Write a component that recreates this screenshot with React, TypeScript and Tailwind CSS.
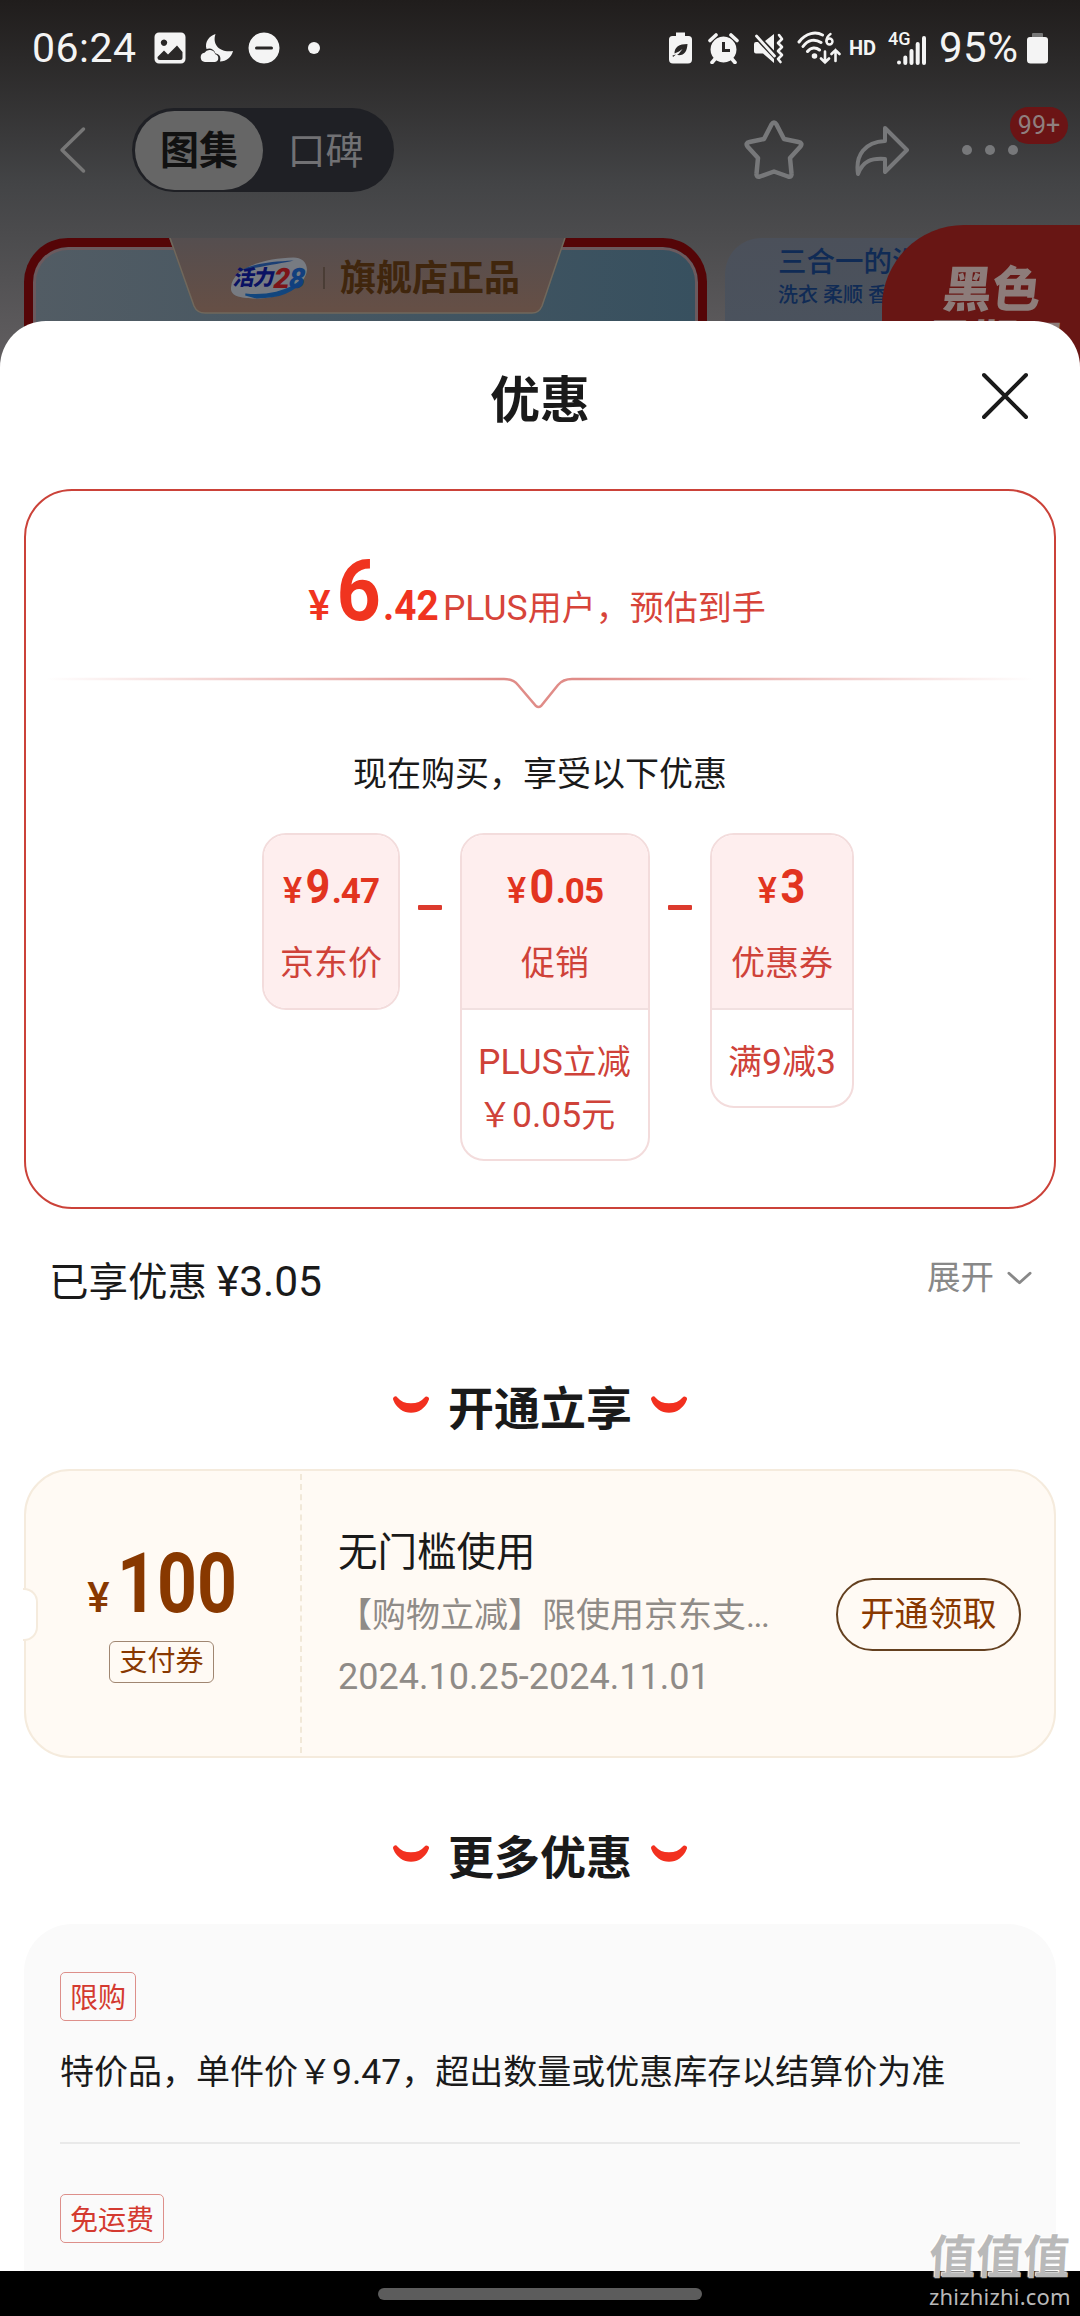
import type { ReactNode } from 'react';

interface PriceStep {
    yuan: string;
    cents?: string;
    label: string;
    details?: string[];
    width: string;
}

const steps: PriceStep[] = [
    { yuan: '9', cents: '.47', label: '京东价', width: 'w-[138px]' },
    { yuan: '0', cents: '.05', label: '促销', details: ['PLUS立减', '￥0.05元'], width: 'w-[190px]' },
    { yuan: '3', label: '优惠券', details: ['满9减3'], width: 'w-[144px]' },
];

// Latin letters and digits run slightly larger than the CJK glyphs beside them
function Mixed({ text }: { text: string }) {
    return (
        <>
            {text.split(/([A-Z0-9.]+)/).map((part, i) => (
                <span key={i} className={i % 2 ? 'text-[1.045em]' : ''}>{part}</span>
            ))}
        </>
    );
}

function StatusBar() {
    return (
        <div className="flex h-[96px] items-center justify-between pl-[32px] pr-[32px] text-[#f4f4f4]">
            <div className="flex items-center">
                <span className="w-[106px] text-[41px] leading-[48px] tracking-[0.5px]">06:24</span>
                <svg className="ml-4 h-8 w-8" viewBox="0 0 32 32" fill="currentColor">
                    <path fillRule="evenodd" d="M5 0.5h22a4.5 4.5 0 0 1 4.5 4.5v22a4.5 4.5 0 0 1-4.5 4.5H5A4.5 4.5 0 0 1 .5 27V5A4.5 4.5 0 0 1 5 .5ZM10 7.5a3.2 3.2 0 1 0 .01 0ZM3.5 25l6.5-6.5 4 4 9-9 5.5 6.5v5.500a2.500 2.500 0 0 1-2.500 2.500H6A2.500 2.500 0 0 1 3.500 25.500Z" />
                </svg>
                <svg className="ml-[14px] h-8 w-[34px]" viewBox="0 0 34 32" fill="currentColor">
                    <path d="M15.500 2C12 12 19 21 33 19c-1.500 6-6.500 10.500-13 10.500 1.500-5-1-7.500-4.500-8C14 17 10 15.500 6.500 17 4.500 10 9 4 15.500 2Z" />
                    <path d="M5 30a4.700 4.700 0 0 1-.5-9.300 6 6 0 0 1 10.800 1.500A4 4 0 0 1 15 30Z" />
                </svg>
                <svg className="ml-[14px] h-8 w-8" viewBox="0 0 32 32" fill="currentColor">
                    <path fillRule="evenodd" d="M16 .5a15.500 15.500 0 1 0 .01 0ZM8.500 14.500h15a1.500 1.500 0 0 1 0 3h-15a1.500 1.500 0 0 1 0-3Z" />
                </svg>
                <span className="ml-[28px] h-3 w-3 rounded-full bg-[#f4f4f4]" />
            </div>
            <div className="flex items-center">
                <svg className="h-8 w-[23px]" viewBox="0 0 23 32" fill="currentColor">
                    <path fillRule="evenodd" d="M7 .5h9V4h3.500A3.500 3.500 0 0 1 23 7.500v20a4 4 0 0 1-4 4H4a4 4 0 0 1-4-4v-20A3.500 3.500 0 0 1 3.500 4H7ZM18.500 12C10 12 5.500 15 5.500 21.500L10 19.500 13.500 17 10 21.500 8 23c7 1 10-3 10.500-11ZM3.500 23.500 7 22.500 4 25Z" />
                </svg>
                <svg className="ml-4 h-8 w-[31px]" viewBox="0 0 31 32" fill="currentColor">
                    <path fillRule="evenodd" d="M15.500 4.500a13 13 0 1 0 .01 0ZM14 10h3v7h5v3h-8Z" />
                    <path d="M2 8.500 8 3M29 8.500 23 3M7 27l-3 3.500M24 27l3 3.500" stroke="currentColor" strokeWidth="3.600" strokeLinecap="round" />
                </svg>
                <svg className="ml-[14px] h-8 w-[32px]" viewBox="0 0 32 32" fill="currentColor">
                    <path d="M1 12a2 2 0 0 1 2-2h2l16 17V31L10 21.500H3a2 2 0 0 1-2-2ZM12 9l9-7v16.500Z" />
                    <path d="m3.500 4 18 20" stroke="currentColor" strokeWidth="2.800" strokeLinecap="round" />
                    <path d="m26 3 3 4-4 4 4 4-4 4 4 4-4 4 2.500 3" fill="none" stroke="currentColor" strokeWidth="2.600" strokeLinecap="round" strokeLinejoin="round" />
                </svg>
                <svg className="ml-[12px] h-[34px] w-[44px]" viewBox="0 0 44 34" fill="none" stroke="currentColor" strokeWidth="3" strokeLinecap="round">
                    <path d="M2 11C9 1.500 19 .5 25.500 4M6 15.500c5-7 12-8 18-4M10.500 20.500c3.500-4.500 8.500-4.500 12-1.500" />
                    <circle cx="17.500" cy="25" r="1.300" fill="currentColor" />
                    <path d="M28 20.500v11m-4-4 4 4 4-4M38.500 30V19m-4 4 4-4 4 4" strokeWidth="2.600" />
                    <path d="M33.500 3c-3 2-4 4-4 7" strokeWidth="2.400" />
                    <circle cx="32.500" cy="10.500" r="3" strokeWidth="2.400" />
                </svg>
                <span className="ml-[8px] text-[20px] font-bold leading-8">HD</span>
                <div className="relative ml-[12px] h-[34px] w-[38px]">
                    <span className="absolute left-0 top-0 text-[18px] font-medium leading-[16px]">4G</span>
                    <svg className="h-full w-full" viewBox="0 0 38 34" stroke="currentColor" strokeWidth="4" strokeLinecap="round">
                        <path d="M11 31.500v0M17.300 26.500v5.500M23.500 20v12M29.700 13v19M36 7v25" />
                    </svg>
                </div>
                <span className="ml-[13px] w-[82px] text-[42px] leading-[48px] tracking-[0.5px]">95%</span>
                <svg className="ml-[6px] h-8 w-[21px]" viewBox="0 0 21 32" fill="currentColor">
                    <path d="M6 1h9a1 1 0 0 1 1 1v3H5V2a1 1 0 0 1 1-1Z" fill="#777" />
                    <path d="M3 5h15a3 3 0 0 1 3 3v20a3.500 3.500 0 0 1-3.500 3.500h-14A3.500 3.500 0 0 1 0 28V8a3 3 0 0 1 3-3Z" />
                </svg>
            </div>
        </div>
    );
}

function NavHeader() {
    return (
        <div className="flex h-[108px] items-center pl-[58px]">
            <svg className="h-[48px] w-[30px]" viewBox="0 0 30 48" fill="none" stroke="#777" strokeWidth="3.500" strokeLinecap="round" strokeLinejoin="round">
                <path d="M25.500 3 4 24l21.500 21" />
            </svg>
            <div className="ml-[44px] flex h-[84px] w-[262px] items-center rounded-full bg-[#1f2025] pl-[3px]">
                <div className="flex h-[79px] w-[128px] items-center justify-center rounded-full bg-[#666] pt-[3px] text-[39px] font-bold text-[#111]">图集</div>
                <div className="flex flex-1 items-center justify-center pr-[6px] pt-[3px] text-[38px] text-[#717174]">口碑</div>
            </div>
            <svg className="ml-[350px] h-[62px] w-[60px]" viewBox="0 0 60 62" fill="none" stroke="#77787a" strokeWidth="4.500" strokeLinejoin="round">
                <path d="M27.500 5.500q2.500-4 5 0l7.500 14.500 14.500 3q4.500 1 2 4.500L46 39l1.500 15.500q.5 4-3.500 3L30 52.500l-14 5q-4 1-3.500-3L14 39 3.500 27.500q-2.500-3.500 2-4.500L20 20Z" />
            </svg>
            <svg className="ml-[50px] h-[52px] w-[56px]" viewBox="0 0 56 52" fill="none" stroke="#77787a" strokeWidth="4" strokeLinejoin="round">
                <path d="M31 4 53 26 31 48V35C17 34 9 37 4 50 1 31 11 18 31 17Z" />
            </svg>
            <div className="relative ml-[52px] flex gap-[13px]">
                <span className="h-[10px] w-[10px] rounded-full bg-[#77787a]" />
                <span className="h-[10px] w-[10px] rounded-full bg-[#77787a]" />
                <span className="h-[10px] w-[10px] rounded-full bg-[#77787a]" />
                <span className="absolute -top-[38px] left-[48px] flex h-[37px] w-[58px] items-center justify-center rounded-full bg-[#6b1415] text-[25px] text-[#8f7f7f]">99+</span>
            </div>
        </div>
    );
}

function Banners() {
    return (
        <div className="flex h-[142px] items-start pl-[24px] pt-[13px]">
            <div className="relative h-[160px] w-[684px] rounded-t-[44px] border-[9px] border-b-0 border-[#550507] bg-linear-to-r from-[#525c64] to-[#37505f] shadow-[inset_0_0_0_3px_#6b5a5e]">
                <svg className="absolute -top-[9px] left-[136px] h-[77px] w-[400px]" viewBox="0 0 400 77">
                    <defs>
                        <linearGradient id="tab" x1="0" y1="0" x2="0" y2="1">
                            <stop offset="0" stopColor="#554e4f" />
                            <stop offset="1" stopColor="#664f45" />
                        </linearGradient>
                    </defs>
                    <path d="M0 0H396L373 68q-3 7-10 7H36q-8 0-11-7Z" fill="url(#tab)" />
                    <path d="M396 0 373 68q-3 7-10 7H36q-8 0-11-7L1 0" fill="none" stroke="#70685c" strokeWidth="1.500" />
                </svg>
                <div className="relative flex items-center pl-[197px] pt-[6px]">
                    <div className="relative h-[46px] w-[78px]">
                        <svg className="absolute inset-0 h-full w-full" viewBox="0 0 76 44">
                            <path d="M1 31C2 14 28 3 62 2c7 0 13 4 13 12C74 30 50 43 22 42 10 41 0 40 1 31Z" fill="#777b82" />
                            <path d="M15 38c20 2 42-2 55-14-8 12-24 17-44 17Z" fill="#12467e" stroke="#12467e" strokeWidth="2" />
                            <path d="M10 15C22 8 40 6 62 5 50 8 34 10 10 15Z" fill="#1b3f74" />
                        </svg>
                        <span className="absolute left-[4px] top-[10px] flex -skew-x-12 items-center whitespace-nowrap text-[21px] font-black leading-[27px] tracking-[-1px] text-[#0a1263]">
                            活力<span className="text-[28px] text-[#7c1418]">2</span><span className="text-[28px] text-[#123f7e]">8</span>
                        </span>
                    </div>
                    <span className="ml-[15px] h-[22px] w-[2px] bg-[#4a3d35]" />
                    <span className="ml-[15px] mt-[2px] text-[36px] font-bold leading-[48px] text-[#40260d]">旗舰店正品</span>
                </div>
            </div>
            <div className="ml-[18px] h-[160px] w-[200px] shrink-0 overflow-hidden rounded-tl-[36px] bg-linear-to-b from-[#4b505a] to-[#4a5460] pl-[53px] pt-[6px]">
                <p className="whitespace-nowrap text-[28.500px] font-medium leading-[38px] text-[#102b55]">三合一的洗</p>
                <p className="whitespace-nowrap text-[20px] font-medium leading-[26px] text-[#102b55]">洗衣 柔顺 香</p>
            </div>
            <div className="-ml-[43px] -mt-[13px] h-[160px] w-[198px] shrink-0 rounded-tl-[82px] bg-[#681614] pl-[61px] pt-[39px]">
                <p className="-skew-x-6 whitespace-nowrap text-[49px] font-black leading-[54px] text-[#8d7c7a]">黑色</p>
                <p className="-ml-[18px] -skew-x-6 whitespace-nowrap text-[46px] font-black leading-[48px] text-[#8d7c7a]">星期五</p>
            </div>
        </div>
    );
}

function StepCard({ step }: { step: PriceStep }) {
    return (
        <div className={`${step.width} overflow-hidden rounded-[24px] border-2 border-[#f3dcdc] bg-white text-[34px] text-[#cf4239]`}>
            <div className="flex h-[173px] flex-col items-center bg-[#feeeee] pt-[28px]">
                <div className="flex h-[48px] items-baseline font-bold leading-[48px] text-[#e2341f]">
                    <span className="mr-[2px] text-[36px] font-medium">¥</span>
                    <span className="inline-block scale-x-90 text-[48px]">{step.yuan}</span>
                    {step.cents && <span className="text-[35px] tracking-[-1px]">{step.cents}</span>}
                </div>
                <span className="mt-[32px] leading-[40px]">{step.label}</span>
            </div>
            {step.details && (
                <div className="border-t-2 border-[#f1e0e0] px-[16px] pb-[17px] pt-[26px] leading-[53px]">
                    {step.details.map(line => (
                        <p key={line} className="whitespace-nowrap"><Mixed text={line} /></p>
                    ))}
                </div>
            )}
        </div>
    );
}

function Minus() {
    return <span className="mt-[72px] h-[5px] w-[24px] rounded-[1px] bg-[#dc3a2d]" />;
}

function Smile() {
    return (
        <svg className="-mt-[6px] h-[20px] w-[38px]" viewBox="0 0 38 20" fill="#f2301f" stroke="#f2301f" strokeWidth="5" strokeLinecap="round" strokeLinejoin="round">
            <path d="M3.500 4C9 19 29 19 34.500 4 27 13 11 13 3.500 4Z" />
        </svg>
    );
}

function SectionTitle({ children }: { children: ReactNode }) {
    return (
        <div className="flex h-[60px] items-center justify-center gap-[18px]">
            <Smile />
            <h3 className="pt-[2px] text-[46px] font-bold leading-[60px] text-[#1a1a1a]">{children}</h3>
            <Smile />
        </div>
    );
}

function PriceSummary() {
    return (
        <div className="mx-6 mt-[14px] flex h-[720px] flex-col items-center rounded-[48px] border-2 border-[#cb4239] pt-[58px]">
            <div className="flex h-[84px] items-baseline pr-[6px] leading-[84px] text-[#f0341f]">
                <span className="mr-[3px] text-[42px] font-medium">¥</span>
                <span className="inline-block scale-x-90 text-[86px] font-bold">6</span>
                <span className="inline-block w-[55px] origin-left scale-x-[.9] text-[43px] font-bold">.42</span>
                <span className="ml-[5px] text-[34px] text-[#d7443a]"><Mixed text="PLUS用户，预估到手" /></span>
            </div>
            <svg className="mt-[37px] h-[40px] w-[988px]" viewBox="0 0 988 40" fill="none">
                <defs>
                    <linearGradient id="fade" gradientUnits="userSpaceOnUse" x1="0" y1="0" x2="988" y2="0">
                        <stop offset="0" stopColor="#e08c88" stopOpacity="0" />
                        <stop offset="0.46" stopColor="#e08c88" />
                        <stop offset="0.54" stopColor="#e08c88" />
                        <stop offset="1" stopColor="#e08c88" stopOpacity="0" />
                    </linearGradient>
                </defs>
                <path d="M0 9H458q9 0 14 6l18 21q2.500 2 5 0l17-21q5-6 14-6H988" stroke="url(#fade)" strokeWidth="2.500" />
            </svg>
            <p className="mt-[44px] text-[34px] leading-[40px] text-[#1a1a1a]">现在购买，享受以下优惠</p>
            <div className="ml-[236px] mt-[39px] flex items-start gap-[18px] self-start">
                <StepCard step={steps[0]} />
                <Minus />
                <StepCard step={steps[1]} />
                <Minus />
                <StepCard step={steps[2]} />
            </div>
        </div>
    );
}

function Coupon() {
    return (
        <div className="relative mx-6 mt-[31px] flex h-[289px] rounded-[46px] border-2 border-[#f5ebdd] bg-[#fffaf4]">
            <span className="absolute -left-[3px] top-[117px] h-[53px] w-[15px] rounded-r-[14px] border-2 border-l-0 border-[#f5ebdd] bg-white" />
            <div className="my-[3px] flex w-[276px] flex-col items-center border-r-2 border-dashed border-[#f1e8d8] pr-[3px] pt-[68px] text-[#883800]">
                <div className="flex h-[84px] items-baseline leading-[84px]">
                    <span className="mr-[7px] text-[42px] font-medium">¥</span>
                    <span className="inline-block w-[119px] origin-left scale-x-[.83] text-[84px] font-bold">100</span>
                </div>
                <span className="mt-[15px] flex h-[42px] w-[105px] items-center justify-center rounded-[6px] border border-[#a08671] text-[28px]">支付券</span>
            </div>
            <div className="flex flex-1 flex-col pl-[36px] pt-[56px]">
                <p className="text-[39.500px] leading-[52px] text-[#1a1a1a]">无门槛使用</p>
                <p className="mt-[14px] text-[34px] leading-[44px] text-[#8f8b87]">【购物立减】限使用京东支<span className="tracking-[-1.500px]">...</span></p>
                <p className="mt-[18px] text-[36px] leading-[44px] text-[#8f8b87]">2024.10.25-2024.11.01</p>
            </div>
            <button className="mr-[33px] mt-[107px] h-[73px] w-[185px] rounded-full border-2 border-[#64401f] text-[34px] text-[#883800]">开通领取</button>
        </div>
    );
}

function Tag({ children }: { children: ReactNode }) {
    return (
        <span className="flex h-[49px] w-fit items-center rounded-[5px] border border-[#dd8f8a] px-[9px] pt-[4px] text-[28px] text-[#d43a30]">
            {children}
        </span>
    );
}

export default function App() {
    return (
        <div className="flex h-[2316px] w-[1080px] flex-col overflow-hidden bg-black font-['Roboto','Noto_Sans_CJK_SC',sans-serif]">
            <div className="h-[367px] shrink-0 overflow-hidden bg-linear-to-b from-[#201d1c] via-[#434446] via-50% to-[#625f61]">
                <StatusBar />
                <NavHeader />
                <div className="mt-[21px]">
                    <Banners />
                </div>
            </div>

            <div className="relative -mt-[46px] h-[1950px] shrink-0 overflow-hidden rounded-t-[46px] bg-white">
                <div className="flex h-[154px] items-center justify-between px-[52px]">
                    <span className="w-[46px]" />
                    <h2 className="pt-[5px] text-[50px] font-bold leading-[60px] text-[#1a1a1a]">优惠</h2>
                    <svg className="-mt-[5px] h-[48px] w-[46px]" viewBox="0 0 46 48" stroke="#1a1a1a" strokeWidth="4" strokeLinecap="round">
                        <path d="M2 3 44 45M44 3 2 45" />
                    </svg>
                </div>

                <PriceSummary />

                <div className="mt-[49px] flex h-[48px] items-center justify-between pl-[49px] pr-[48px]">
                    <p className="whitespace-pre pt-[1px] text-[39.500px] leading-[48px] text-[#1a1a1a]">已享优惠 <span className="text-[42.500px]">¥3.05</span></p>
                    <div className="-mt-[8px] flex items-center gap-[13px] text-[33.500px] leading-[40px] text-[#888]">
                        展开
                        <svg className="h-[14px] w-[25px]" viewBox="0 0 26 14" fill="none" stroke="currentColor" strokeWidth="3" strokeLinecap="round" strokeLinejoin="round">
                            <path d="m2 2 11 10L24 2" />
                        </svg>
                    </div>
                </div>

                <div className="mt-[72px]">
                    <SectionTitle>开通立享</SectionTitle>
                </div>
                <Coupon />

                <div className="mt-[69px]">
                    <SectionTitle>更多优惠</SectionTitle>
                </div>
                <div className="mx-6 mt-[37px] h-[400px] rounded-t-[48px] bg-[#fafafa] px-[36px] pt-[48px]">
                    <Tag>限购</Tag>
                    <p className="mt-[31px] whitespace-nowrap text-[34px] leading-[40px] text-[#1a1a1a]"><Mixed text="特价品，单件价￥9.47，超出数量或优惠库存以结算价为准" /></p>
                    <div className="mt-[50px] h-[2px] bg-[#e9e9e9]" />
                    <div className="mt-[50px]">
                        <Tag>免运费</Tag>
                    </div>
                </div>
            </div>

            <div className="relative flex h-[45px] shrink-0 justify-center pt-[17px]">
                <span className="h-[12px] w-[324px] rounded-full bg-[#5c5c5c]" />
                <div className="absolute bottom-[8px] right-[9px] flex w-[142px] flex-col text-[#b9b9b9]">
                    <span className="-skew-x-3 whitespace-nowrap text-[47px] font-bold leading-[48px] [text-shadow:-1px_-1px_1px_#fff]">值值值</span>
                    <span className="mt-[2px] font-['Noto_Sans'] text-[22px] leading-[24px] tracking-[0.2px]">zhizhizhi.com</span>
                </div>
            </div>
        </div>
    );
}
